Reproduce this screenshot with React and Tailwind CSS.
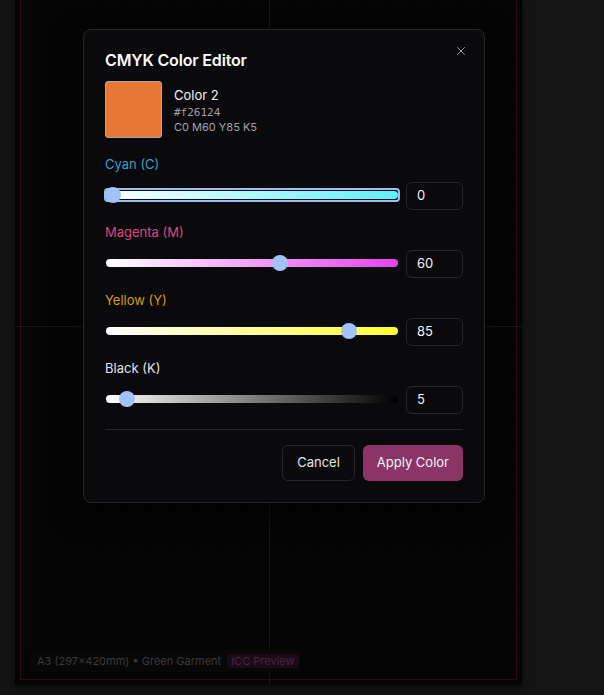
import { X } from 'lucide-react';

const channels = [
  { name: 'Cyan (C)', value: 0, label: 'text-[#3a9fc9]', track: 'bg-[linear-gradient(to_right,#ffffff,#5ef0fa)]', focused: true },
  { name: 'Magenta (M)', value: 60, label: 'text-[#dc467c]', track: 'bg-[linear-gradient(to_right,#ffffff,#e443ec)]' },
  { name: 'Yellow (Y)', value: 85, label: 'text-[#d39b1c]', track: 'bg-[linear-gradient(to_right,#ffffff,#ffff2e)]' },
  { name: 'Black (K)', value: 5, label: 'text-[#e4e4e7]', track: 'bg-[linear-gradient(to_right,#ffffff,#000000)]' },
];

function ChannelSlider({ channel }) {
  return (
    <div>
      <div className={`text-[13px] leading-5 mb-2 ${channel.label}`}>{channel.name}</div>
      <div className="flex items-center gap-[7px] h-7">
        <div className="relative flex-1 h-4 -mt-[3px]">
          {channel.focused && (
            <div className="absolute left-[-1px] right-[-1px] top-[1px] bottom-[1px] rounded-[4px] border-2 border-[#9cc0f5]" />
          )}
          <div className={`absolute left-[1px] right-[1px] top-1 h-2 rounded-full ${channel.track}`} />
          {/* thumb follows native range geometry */}
          <div
            className="absolute top-0 w-4 h-4 rounded-full bg-[#a0c3fa]"
            style={{ left: `calc(${channel.value}% - ${channel.value * 0.16}px)` }}
          />
        </div>
        <div className="w-[57px] h-7 rounded-md border border-[#27272a] bg-[#0a0a0c] flex items-center pl-[10px] text-[13px] text-[#f4f4f5]">
          {channel.value}
        </div>
      </div>
    </div>
  );
}

export default function App() {
  return (
    <div className="relative h-[695px] w-[604px] overflow-hidden bg-[#141414] font-['Inter','Liberation_Sans',sans-serif]">
      {/* Canvas */}
      <div className="relative ml-[15px] w-[507px] h-[685px] bg-[#040404] shadow-[0_2px_6px_rgba(0,0,0,0.6)] bg-[radial-gradient(#090909_1px,transparent_1px)] bg-[length:12px_12px]">
        <div className="absolute left-[5px] right-[5px] top-0 bottom-[5px] border-x border-b border-[#2a0d0d]" />
        <div className="absolute left-[254px] top-0 bottom-0 w-px bg-[#161616]" />
        <div className="absolute left-0 right-0 top-[326px] h-px bg-[#161616]" />
        <div className="absolute left-[14px] top-[650px] h-[22px] w-[271px] bg-[#070707] flex items-center pl-2 gap-[6px] text-[11px] text-[#3a3a3a]">
          <span>A3 (297×420mm) • Green Garment</span>
          <span className="px-[4px] leading-[14px] rounded-sm bg-[#1c0a16] text-[#47283d]">ICC Preview</span>
        </div>
      </div>

      {/* Dialog */}
      <div className="absolute inset-0 pl-[83px] pt-[29px]">
        <div className="relative w-[402px] rounded-lg border border-[#26262a] bg-[#0a0a0c] px-[21px] pt-[18px] pb-[21px] shadow-[0_10px_30px_rgba(0,0,0,0.6)]">
          <button className="absolute right-[16px] top-[14px] text-[#a1a1aa]">
            <X size={14} strokeWidth={1.6} />
          </button>
          <h2 className="text-[16px] leading-6 font-semibold tracking-[-0.01em] text-[#fafafa] mb-[9px]">CMYK Color Editor</h2>

          <div className="flex items-center gap-3 mb-4">
            <div className="w-[57px] h-[57px] rounded-[3px] border border-[#a8a8ad] bg-[#e87736]" />
            <div>
              <div className="text-[13px] leading-5 text-[#f4f4f5]">Color 2</div>
              <div className="text-[11px] leading-[15px] text-[#a1a1aa] font-['DejaVu_Sans_Mono',monospace]">#f26124</div>
              <div className="text-[11px] leading-[15px] text-[#a1a1aa]">C0 M60 Y85 K5</div>
            </div>
          </div>

          <div className="flex flex-col gap-3">
            {channels.map((c) => (
              <ChannelSlider key={c.name} channel={c} />
            ))}
          </div>

          <div className="mt-[15px] h-px bg-[#27272a]" />

          <div className="flex justify-end gap-2 pt-[15px]">
            <button className="h-9 px-[14px] rounded-md border border-[#27272a] bg-[#0a0a0c] text-[13px] text-[#e4e4e7]">
              Cancel
            </button>
            <button className="h-9 px-[14px] rounded-md bg-[#8a3566] text-[13px] text-[#f4f4f5]">
              Apply Color
            </button>
          </div>
        </div>
      </div>
    </div>
  );
}
